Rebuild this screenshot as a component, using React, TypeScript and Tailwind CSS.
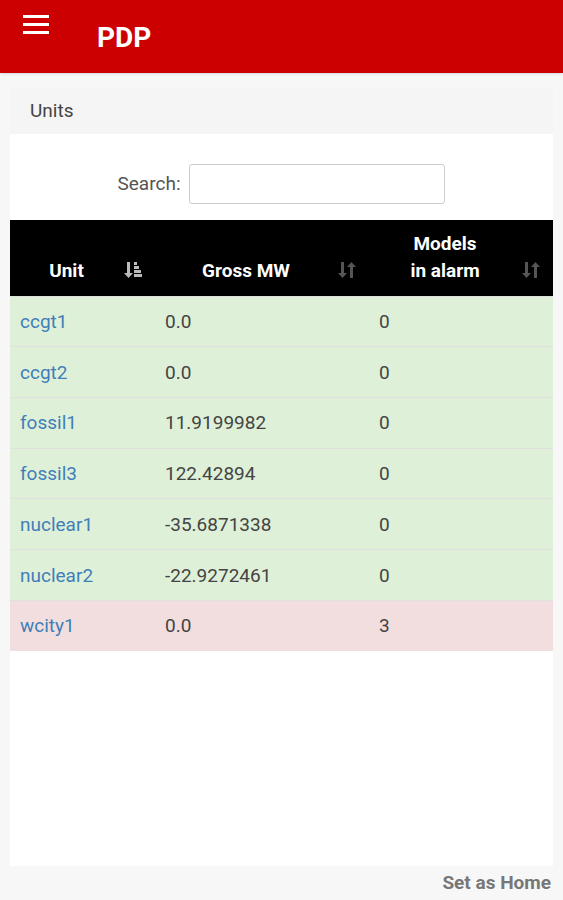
import React from "react";

type Row = { unit: string; gross: string; alarms: number };

const rows: Row[] = [
  { unit: "ccgt1", gross: "0.0", alarms: 0 },
  { unit: "ccgt2", gross: "0.0", alarms: 0 },
  { unit: "fossil1", gross: "11.9199982", alarms: 0 },
  { unit: "fossil3", gross: "122.42894", alarms: 0 },
  { unit: "nuclear1", gross: "-35.6871338", alarms: 0 },
  { unit: "nuclear2", gross: "-22.9272461", alarms: 0 },
  { unit: "wcity1", gross: "0.0", alarms: 3 },
];

const SortActive = () => (
  <svg width="20" height="20" viewBox="0 0 20 20" fill="#bbb">
    <path d="M4 2h3v11h3l-4.5 5L1 13h3z" />
    <rect x="11" y="2" width="3" height="3" />
    <rect x="11" y="6" width="5" height="3" />
    <rect x="11" y="10" width="7" height="3" />
    <rect x="11" y="14" width="8" height="3" />
  </svg>
);

const SortBoth = () => (
  <svg width="20" height="20" viewBox="0 0 20 20" fill="#555">
    <path d="M4 2h3v11h3l-4.5 5L1 13h3z" />
    <path d="M13 18h3V7h3l-4.5-5L10 7h3z" />
  </svg>
);

const Th = ({ children, active, className }: { children: React.ReactNode; active?: boolean; className: string }) => (
  <th className={`relative align-bottom text-center font-bold text-white pb-[12px] pt-[8px] pl-[8px] pr-[40px] leading-[27px] ${className}`}>
    {children}
    <span className="absolute right-[12px] bottom-[16px]">{active ? <SortActive /> : <SortBoth />}</span>
  </th>
);

export default function App() {
  return (
    <div className="min-h-[900px] flex flex-col bg-[#f7f7f7] text-[#333]" style={{ fontFamily: "Roboto, 'Liberation Sans', sans-serif" }}>
      <header className="h-[73px] bg-[#cc0000] flex items-center shrink-0 shadow-sm">
        <div className="ml-[23px] mt-[-24px] flex flex-col gap-[5px]">
          <span className="block w-[26px] h-[3px] bg-white" />
          <span className="block w-[26px] h-[3px] bg-white" />
          <span className="block w-[26px] h-[3px] bg-white" />
        </div>
        <h1 className="ml-[48px] mt-[2px] text-white font-bold text-[28px]">PDP</h1>
      </header>

      <main className="flex-1 flex flex-col px-[10px] pt-[15px]">
        <div className="flex-1 flex flex-col">
          <div className="h-[46px] bg-[#f5f5f5] flex items-center px-[20px] text-[19px] text-[#444]">Units</div>
          <div className="flex-1 bg-white">
            <div className="flex items-center justify-center gap-[9px] pt-[30px] pb-[16px]">
              <label className="text-[19px] text-[#555]">Search:</label>
              <input className="w-[256px] h-[40px] border border-[#ccc] rounded-[3px] outline-none" />
            </div>
            <table className="w-full border-collapse text-[19px]">
              <thead className="bg-black">
                <tr className="h-[76px]">
                  <Th active className="w-[145px]">Unit</Th>
                  <Th className="w-[214px]">Gross MW</Th>
                  <Th className="">
                    Models
                    <br />
                    in alarm
                  </Th>
                </tr>
              </thead>
              <tbody>
                {rows.map((r) => (
                  <tr key={r.unit} className={`h-[50.7px] border-t border-[#e0e0e0] ${r.alarms > 0 ? "bg-[#f2dede]" : "bg-[#dff0d8]"}`}>
                    <td className="px-[10px] pt-[2px] text-[#3f7fb8]">{r.unit}</td>
                    <td className="px-[10px] pt-[2px] text-[#444]">{r.gross}</td>
                    <td className="px-[10px] pt-[2px] text-[#444]">{r.alarms}</td>
                  </tr>
                ))}
              </tbody>
            </table>
          </div>
        </div>
      </main>

      <footer className="h-[34px] shrink-0 flex items-center justify-end pr-[12px] bg-[#f7f7f7]">
        <span className="font-bold text-[19px] text-[#777]">Set as Home</span>
      </footer>
    </div>
  );
}
